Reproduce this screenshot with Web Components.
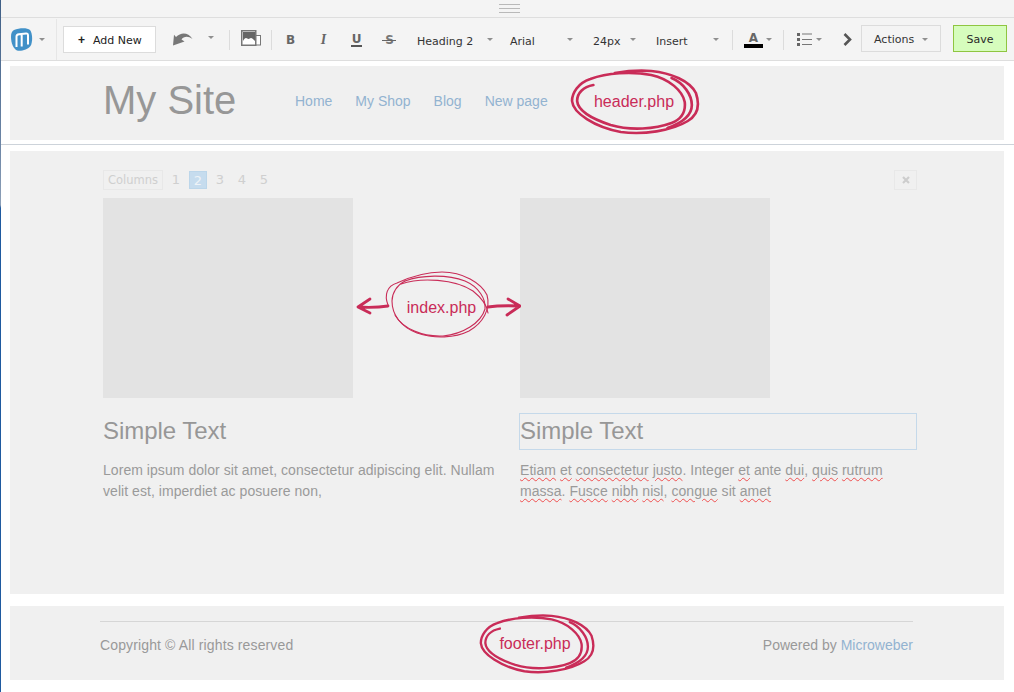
<!DOCTYPE html>
<html lang="en">
<head>
<meta charset="utf-8">
<title>My Site</title>
<style>
  html, body { margin: 0; background: #fff; }
  body { font-family: "Liberation Sans", Arial, sans-serif; width: 1014px; height: 692px; overflow: hidden; }
</style>
</head>
<body>
<edge-strip></edge-strip>
<mw-toolbar></mw-toolbar>
<site-header></site-header>
<site-main></site-main>
<site-footer></site-footer>

<script>
// thin blue line down the left side of the window
class EdgeStrip extends HTMLElement {
  constructor() {
    super();
    this.attachShadow({ mode: "open" }).innerHTML = `
      <style>
        :host {
          position: absolute;
          left: 0;
          top: 0;
          width: 1px;
          height: 692px;
          z-index: 5;
          background: linear-gradient(#3f5f86 0, #6d86a6 145px, #8da0b8 205px, #1f5aa0 208px, #1f5aa0 692px);
        }
      </style>`;
  }
}
customElements.define("edge-strip", EdgeStrip);

// small grey dropdown triangle
class ToolCaret extends HTMLElement {
  constructor() {
    super();
    this.attachShadow({ mode: "open" }).innerHTML = `
      <style>
        :host {
          display: block;
          width: 0;
          height: 0;
          border-left: 3px solid transparent;
          border-right: 3px solid transparent;
          border-top: 3px solid #8f8f8f;
        }
      </style>`;
  }
}
customElements.define("tool-caret", ToolCaret);

// one toolbar cell: fixed width, label in the slot
class ToolItem extends HTMLElement {
  constructor() {
    super();
    this.attachShadow({ mode: "open" }).innerHTML = `
      <style>
        :host {
          display: flex;
          align-items: center;
          height: 100%;
          flex: none;
          font: 11px "DejaVu Sans", Verdana, sans-serif;
          color: #333;
          white-space: nowrap;
        }
        :host([sep]) { border-right: 1px solid #dcdcdc; height: 20px; }
      </style>
      <slot></slot>`;
  }
}
customElements.define("tool-item", ToolItem);

class MwToolbar extends HTMLElement {
  constructor() {
    super();
    const shadow = this.attachShadow({ mode: "open" });
    shadow.innerHTML = `
      <style>
        :host { display: block; height: 61px; background: #f4f4f4; border-bottom: 1px solid #dedede; box-sizing: border-box; }
        .handle { height: 18px; display: flex; flex-direction: column; align-items: center; justify-content: center; gap: 3px; padding-left: 5px; box-sizing: border-box; border-bottom: 1px solid #dedede; }
        .handle i { display: block; width: 21px; height: 1px; background: #b9b9b9; }
        .bar { height: 42px; display: flex; align-items: center; padding-left: 11px; padding-top: 1px; box-sizing: border-box; }
        .logo { width: 45px; border-right: 1px solid #e6e6e6; height: 41px; gap: 6px; }
        .btn { height: 27px; box-sizing: border-box; border: 1px solid #dcdcdc; display: flex; align-items: center; }
        .add { width: 93px; margin-left: 6px; background: #fff; padding: 1px 0 0 14px; gap: 8px; color: #222; }
        .add b { font: bold 12px "Liberation Sans", sans-serif; }
        .pick { padding-top: 3px; box-sizing: border-box; }
        .pick tool-caret { margin-top: -3px; }
        svg { display: block; }
        .fmt { width: 33px; justify-content: center; padding-top: 1px; box-sizing: border-box; font-family: "DejaVu Sans", sans-serif; font-size: 12px; color: #666; }
        .actions { width: 80px; margin: 0 0 2px 3px; padding: 1px 0 0 12px; gap: 8px; }
        .save { width: 54px; margin: 0 0 2px 12px; padding-top: 1px; justify-content: center; background: #d6fdbd; border-color: #8fc541; color: #2a2a2a; }
      </style>
      <div class="handle"><i></i><i></i><i></i></div>
      <div class="bar">
        <tool-item class="logo">
          <svg width="22" height="23" viewBox="0 0 22 23"><path d="M3 2 C8 0 16 -0.500 19 2 C21.500 5 22 14 19.500 18 C17 21.500 10 23.500 6 22.500 C2.500 21 0 15 0 9 C0 5 1 3 3 2 Z" fill="#4191c8"/><path d="M5.500 19 V8.500 C5.500 7 6.500 6.500 8 6.300 L15 5.500 C16.500 5.400 17 6 17 7.500 V16.500 M10.700 6.500 V18.500" fill="none" stroke="#fff" stroke-width="2"/></svg>
          <tool-caret></tool-caret>
        </tool-item>
        <tool-item class="btn add"><b>+</b>Add New</tool-item>
        <tool-item style="width:56px;margin-left:17px;gap:15px">
          <svg width="20" height="13" viewBox="0 0 20 13" style="margin-top:-1px"><path d="M3 4 C8 -1 15 -1 19.500 6 C15 2.500 10.500 3.500 8.500 6.500 L11.500 8.500 L0 12.500 L1 1.800 Z" fill="#777"/></svg>
          <tool-caret style="margin-top:-4px"></tool-caret>
        </tool-item>
        <tool-item sep style="width:0"></tool-item>
        <tool-item style="width:41px;justify-content:center">
          <svg width="20" height="16" viewBox="0 0 20 16" style="margin-bottom:4px"><rect x="14.500" y="5.500" width="5" height="9.500" fill="#fff" stroke="#777"/><rect x="0.750" y="0.750" width="14" height="14.500" fill="#fff" stroke="#777" stroke-width="1.500"/><path d="M2 2 H14 V11 C12 9 11 8 10 8 C9 8 8.500 9 7.500 9 C6.500 9 6 8 5 8 C4 8 3 9 2 11 Z" fill="#666"/></svg>
        </tool-item>
        <tool-item sep style="width:0"></tool-item>
        <tool-item class="fmt" style="margin-left:2px"><b>B</b></tool-item>
        <tool-item class="fmt"><i style="font-family:'Liberation Serif',serif;font-size:14px;font-weight:bold">I</i></tool-item>
        <tool-item class="fmt"><b style="border-bottom:2px solid #555;line-height:11px;padding:0 1px">U</b></tool-item>
        <tool-item class="fmt"><b style="position:relative;color:#777">S<svg style="position:absolute;left:-3px;top:7px" width="14" height="1"><rect width="14" height="1" fill="#666"/></svg></b></tool-item>
        <tool-item class="pick" style="width:93px;margin-left:11px"><span style="width:70px">Heading 2</span><tool-caret></tool-caret></tool-item>
        <tool-item class="pick" style="width:83px"><span style="width:57px">Arial</span><tool-caret></tool-caret></tool-item>
        <tool-item class="pick" style="width:63px"><span style="width:37px">24px</span><tool-caret></tool-caret></tool-item>
        <tool-item class="pick" style="width:76px"><span style="width:57px">Insert</span><tool-caret></tool-caret></tool-item>
        <tool-item sep style="width:0"></tool-item>
        <tool-item style="width:50px;padding-left:11px;box-sizing:border-box;gap:3px">
          <svg width="19" height="18" viewBox="0 0 19 18"><text x="9.500" y="11" text-anchor="middle" font-family="DejaVu Sans, sans-serif" font-weight="bold" font-size="12" fill="#666">A</text><rect x="0" y="13" width="19" height="4" fill="#000"/></svg>
          <tool-caret></tool-caret>
        </tool-item>
        <tool-item sep style="width:0"></tool-item>
        <tool-item style="width:51px;padding-left:13px;box-sizing:border-box;gap:4px">
          <svg width="15" height="13" viewBox="0 0 15 13"><path d="M0 0 H3 V3 H0 Z M0 5 H3 V8 H0 Z M0 10 H3 V13 H0 Z" fill="#666"/><path d="M5 1 H15 M5 6.500 H15 M5 11.500 H15" stroke="#777"/></svg>
          <tool-caret></tool-caret>
        </tool-item>
        <tool-item style="width:23px;padding-left:8px;box-sizing:border-box">
          <svg width="9" height="13" viewBox="0 0 9 13"><path d="M1.500 1 L7 6.500 L1.500 12" fill="none" stroke="#555" stroke-width="2.600"/></svg>
        </tool-item>
        <tool-item class="btn actions">Actions<tool-caret></tool-caret></tool-item>
        <tool-item class="btn save">Save</tool-item>
      </div>`;
  }
}
customElements.define("mw-toolbar", MwToolbar);

// hand drawn red ring over the template areas, label goes in the slot
// same strokes for both rings, the footer one is just a bit smaller
const RING_PATHS = [
  "M23 16 C13 18 7 24 7 32 C8 42 22 50 40 56 C60 62 84 60 100 54 C110 50 114 42 113 33 C111 22 98 10 80 6 C60 2 36 4 20 10 C8 14 2 24 2 32 C3 44 24 58 50 63 C72 66 100 62 116 52 C126 46 128 36 124 24 C118 12 100 4 80 2 C68 1 56 2 44 4",
  "M100 9 C112 14 120 26 120 36 C120 46 110 54 96 59"
];

class ScribbleMark extends HTMLElement {
  constructor() {
    super();
    const w = Number(this.getAttribute("w"));
    const h = Number(this.getAttribute("h"));
    const shift = Number(this.getAttribute("shift"));
    const paths = RING_PATHS.map(d => `<path d="${d}"/>`).join("");
    this.attachShadow({ mode: "open" }).innerHTML = `
      <style>
        :host {
          position: absolute;
          display: flex;
          align-items: center;
          justify-content: center;
          box-sizing: border-box;
          width: ${w}px;
          height: ${h}px;
          padding-right: ${shift}px;
          font-size: 16px;
          color: #c92c58;
          white-space: nowrap;
        }
        svg { position: absolute; left: 0; top: 0; fill: none; stroke: #c92c58; stroke-width: 2.600; stroke-linecap: round; }
      </style>
      <svg width="${w}" height="${h}" viewBox="0 0 130 66" preserveAspectRatio="none">${paths}</svg>
      <slot></slot>`;
  }
}
customElements.define("scribble-mark", ScribbleMark);

// the index.php ring with an arrow to both columns
class ScribbleArrows extends HTMLElement {
  constructor() {
    super();
    this.attachShadow({ mode: "open" }).innerHTML = `
      <style>
        :host {
          position: absolute;
          display: flex;
          align-items: center;
          justify-content: center;
          box-sizing: border-box;
          width: 166px;
          height: 72px;
          padding: 8px 0 0 7px;
          font-size: 16px;
          color: #c92c58;
        }
        svg { position: absolute; left: 0; top: 1px; fill: none; stroke: #c92c58; stroke-linecap: round; stroke-linejoin: round; }
      </style>
      <svg width="166" height="72" viewBox="0 0 166 72">
        <g stroke-width="1.100">
          <path d="M33 36 C29 26 32 17 42 14 C55 8 70 3 87 3 C108 3 126 14 132 26 C136 40 128 54 114 62 C100 69 80 70 62 64 C46 58 37 46 37 32 C37 24 42 16 50 12"/>
          <path d="M50 12 C66 6 92 5 110 12 C124 18 131 30 130 40 C126 54 108 65 88 67 C68 68 48 60 40 46"/>
          <path d="M46 15 C66 8 100 10 118 22 C128 30 132 36 133 44"/>
        </g>
        <g stroke-width="2.800">
          <path d="M33 37 C23 38.500 13 38.500 3 38 M15 30 L3 38 L15 44"/>
          <path d="M133 38 C143 36.500 153 36.500 165 37 M153 30 L165 37 L152 46"/>
        </g>
      </svg>
      <slot></slot>`;
  }
}
customElements.define("scribble-arrows", ScribbleArrows);

class SiteHeader extends HTMLElement {
  constructor() {
    super();
    this.attachShadow({ mode: "open" }).innerHTML = `
      <style>
        :host { display: block; position: relative; height: 74px; margin: 5px 10px 0; background: #f0f0f0; }
        .row { display: flex; align-items: center; height: 100%; padding-left: 93px; }
        h1 { margin: 0; width: 192px; font-size: 40px; font-weight: normal; color: #979797; padding-bottom: 5px; }
        nav { display: flex; gap: 23px; font-size: 14px; color: #93b3d0; padding-bottom: 4px; }
        scribble-mark { left: 560px; top: 3px; }
      </style>
      <div class="row">
        <h1>My Site</h1>
        <nav><span>Home</span><span>My Shop</span><span>Blog</span><span>New page</span></nav>
      </div>
      <scribble-mark w="132" h="66" shift="4">header.php</scribble-mark>`;
  }
}
customElements.define("site-header", SiteHeader);

class SiteMain extends HTMLElement {
  constructor() {
    super();
    this.attachShadow({ mode: "open" }).innerHTML = `
      <style>
        :host { display: block; position: relative; box-sizing: border-box; height: 450px; margin: 4px 0 0; padding: 6px 10px 0; border-top: 1px solid #cdd3da; }
        .area { height: 443px; background: #f0f0f0; padding: 19px 87px 0 93px; box-sizing: border-box; }
        .cols { display: flex; align-items: center; height: 20px; font: 11.500px "DejaVu Sans", Verdana, sans-serif; color: #cfcfcf; }
        .label { box-sizing: border-box; width: 60px; height: 20px; line-height: 18px; text-align: center; border: 1px solid #e8e8e8; margin-right: 2px; }
        .num { width: 22px; text-align: center; font-size: 13px; margin-top: -1px; }
        .num.on { box-sizing: border-box; width: 18px; height: 18px; line-height: 17px; margin: -1px 2px 0; background: #c6dcee; border: 1px solid #bcd6ea; color: #eef3f7; }
        .close { margin-left: auto; width: 23px; height: 20px; box-sizing: border-box; border: 1px solid #e8e8e8; display: flex; align-items: center; justify-content: center; }
        .grid { display: grid; grid-template-columns: 397px 397px; column-gap: 20px; margin-top: 8px; }
        .pic { width: 250px; height: 200px; background: #e3e3e3; }
        h2 { box-sizing: border-box; height: 37px; line-height: 34px; margin: 15px 0 0 -1px; font-size: 24px; font-weight: normal; color: #979797; border: 1px solid transparent; letter-spacing: -0.05px; }
        .sel h2 { border-color: #c5d9ea; }
        p { margin: 10px 0 0; font-size: 14px; line-height: 21px; color: #9a9a9a; letter-spacing: 0.05px; }
        .sp { text-decoration: underline wavy #ef4f4f 1px; text-underline-offset: 2px; }
        scribble-arrows { left: 355px; top: 123px; }
      </style>
      <div class="area">
        <div class="cols">
          <span class="label">Columns</span>
          <span class="num">1</span><span class="num on">2</span><span class="num">3</span><span class="num">4</span><span class="num">5</span>
          <span class="close"><svg width="8" height="8" viewBox="0 0 8 8"><path d="M1 1 L7 7 M7 1 L1 7" stroke="#cdcdcd" stroke-width="2.200"/></svg></span>
        </div>
        <div class="grid">
          <div>
            <div class="pic"></div>
            <h2>Simple Text</h2>
            <p>Lorem ipsum dolor sit amet, consectetur adipiscing elit. Nullam velit est, imperdiet ac posuere non,</p>
          </div>
          <div class="sel">
            <div class="pic"></div>
            <h2>Simple Text</h2>
            <p><span class="sp">Etiam</span> <span class="sp">et</span> <span class="sp">consectetur</span> <span class="sp">justo</span>. Integer <span class="sp">et</span> ante <span class="sp">dui</span>, <span class="sp">quis</span> <span class="sp">rutrum</span> <span class="sp">massa</span>. <span class="sp">Fusce</span> <span class="sp">nibh</span> <span class="sp">nisl</span>, <span class="sp">congue</span> sit <span class="sp">amet</span></p>
          </div>
        </div>
      </div>
      <scribble-arrows>index.php</scribble-arrows>`;
  }
}
customElements.define("site-main", SiteMain);

class SiteFooter extends HTMLElement {
  constructor() {
    super();
    this.attachShadow({ mode: "open" }).innerHTML = `
      <style>
        :host { display: block; position: relative; height: 74px; margin: 12px 10px 0; background: #f0f0f0; padding: 15px 91px 0 90px; box-sizing: border-box; }
        .row { display: flex; justify-content: space-between; border-top: 1px solid #d6d6d6; padding-top: 15px; font-size: 14px; line-height: 16px; color: #999; }
        .copy { letter-spacing: 0.13px; }
        a { color: #93b3d0; text-decoration: none; }
        scribble-mark { left: 469px; top: 8px; }
      </style>
      <div class="row"><span class="copy">Copyright © All rights reserved</span><span>Powered by <a>Microweber</a></span></div>
      <scribble-mark w="118" h="60" shift="6">footer.php</scribble-mark>`;
  }
}
customElements.define("site-footer", SiteFooter);
</script>
</body>
</html>
